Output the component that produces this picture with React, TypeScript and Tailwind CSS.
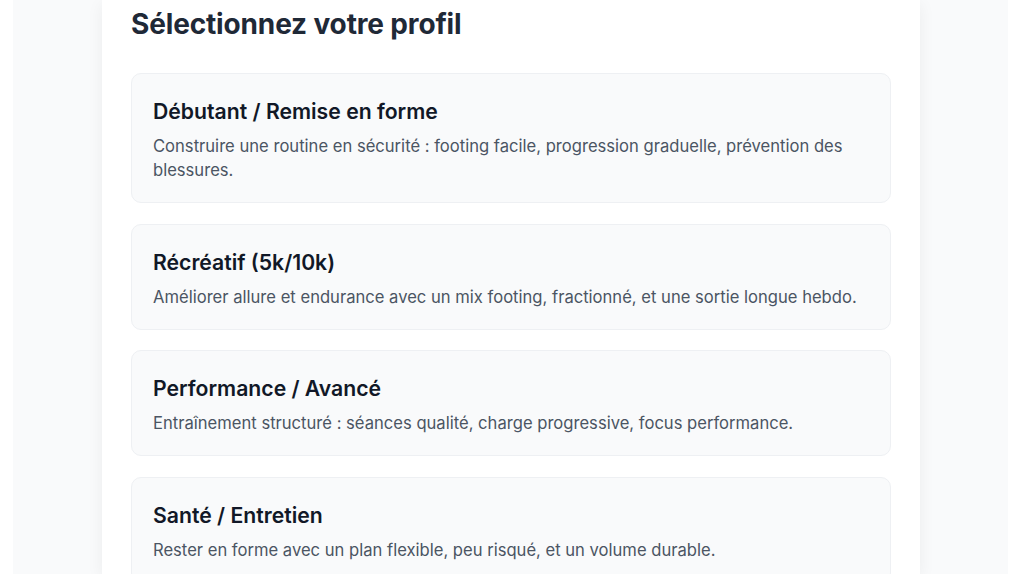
import React from "react";

const profiles = [
  {
    title: "Débutant / Remise en forme",
    desc: "Construire une routine en sécurité : footing facile, progression graduelle, prévention des blessures.",
  },
  {
    title: "Récréatif (5k/10k)",
    desc: "Améliorer allure et endurance avec un mix footing, fractionné, et une sortie longue hebdo.",
  },
  {
    title: "Performance / Avancé",
    desc: "Entraînement structuré : séances qualité, charge progressive, focus performance.",
  },
  {
    title: "Santé / Entretien",
    desc: "Rester en forme avec un plan flexible, peu risqué, et un volume durable.",
  },
];

export default function App() {
  return (
    <div className="h-[574px] overflow-hidden bg-white" style={{ fontFamily: "Inter, 'Noto Sans', sans-serif" }}>
      <div className="ml-[13px] w-[995px] h-full bg-[#f9fafb] flex">
        <div className="ml-[89px] w-[818px] bg-white shadow-[0_4px_16px_rgba(0,0,0,0.06)] px-[29px] pt-[6px]">
          <h2 className="text-[28px] leading-[36px] font-bold text-[#1f2937] tracking-[-0.15px] mb-[31px]">
            Sélectionnez votre profil
          </h2>
          <div className="flex flex-col gap-[20.5px]">
            {profiles.map((p) => (
              <div
                key={p.title}
                className="rounded-[10px] border border-[#eef0f3] bg-[#f9fafb] px-[21px] pt-[23px] pb-[20px]"
              >
                <div className="text-[21.2px] leading-[28px] font-semibold text-[#111827] mb-[9px]">{p.title}</div>
                <div className="text-[16.6px] leading-[24px] text-[#4b5563]">{p.desc}</div>
              </div>
            ))}
          </div>
        </div>
      </div>
    </div>
  );
}
